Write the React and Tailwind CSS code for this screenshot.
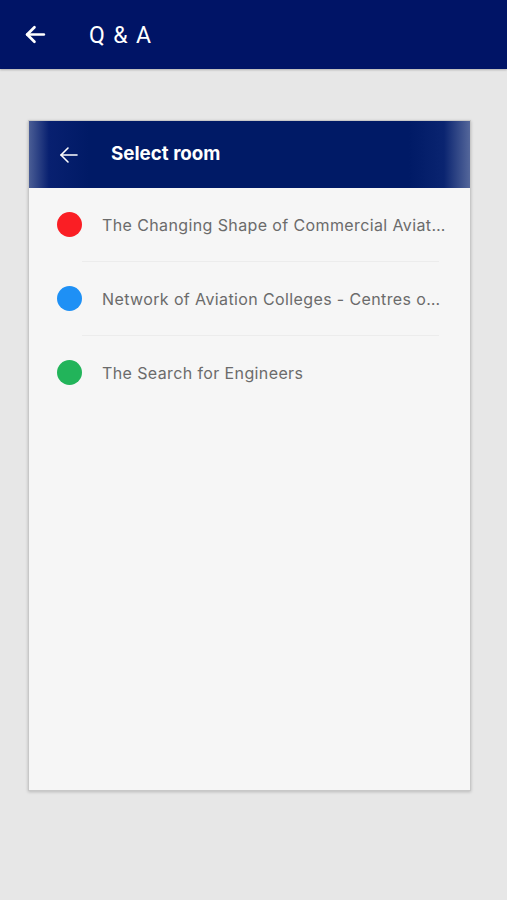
import React from "react";

const rooms = [
  { id: 1, color: "bg-[#fa1e24]", title: "The Changing Shape of Commercial Aviation in a Changing World" },
  { id: 2, color: "bg-[#1e90f5]", title: "Network of Aviation Colleges - Centres of Excellence" },
  { id: 3, color: "bg-[#22b45a]", title: "The Search for Engineers" },
];

const Arrow = ({ className, stroke = 2.5 }) => (
  <svg viewBox="0 0 24 24" className={className} fill="none" stroke="currentColor" strokeWidth={stroke} strokeLinecap="round" strokeLinejoin="round">
    <path d="M20 12H4" />
    <path d="M11 5l-7 7 7 7" />
  </svg>
);

const App = () => {
  return (
    <div className="w-[507px] h-[900px] bg-[#e7e7e7] flex flex-col font-['Inter',sans-serif]">
      <header className="h-[69px] shrink-0 bg-[#001466] flex items-center shadow-[0_1px_2px_rgba(0,0,0,0.25)]">
        <Arrow className="w-[25px] h-[25px] ml-[23px] text-white" stroke={2.6} />
        <span className="ml-[41px] mt-[3px] text-white text-[23px] tracking-[0.06em] font-['Roboto',sans-serif]">Q &amp; A</span>
      </header>

      <div className="pt-[51px] px-[28px]">
        <div className="w-[443px] h-[671px] bg-[#f6f6f6] border border-[#c8c8c8] shadow-[0_1px_3px_rgba(0,0,0,0.2)] flex flex-col">
          <div className="h-[67px] shrink-0 flex items-center bg-[linear-gradient(to_right,#4a5d95_0px,#082070_20px,#001a66_60px,#001a66_380px,#0a2470_415px,#5a6c9e_443px)]">
            <Arrow className="w-[24px] h-[24px] ml-[28px] text-white" stroke={1.6} />
            <span className="ml-[30px] text-white text-[18.8px] font-bold">Select room</span>
          </div>
          <ul className="flex flex-col">
            {rooms.map((room, index) => (
              <li key={room.id} className="flex flex-col">
                <div className="h-[73px] flex items-center pl-[28px] pr-[24px]">
                  <span className={`w-[25px] h-[25px] rounded-full shrink-0 ${room.color}`} />
                  <span className="ml-[20px] text-[16px] tracking-[0.024em] text-[#6b6b6b] truncate">{room.title}</span>
                </div>
                {index < rooms.length - 1 && (
                  <div className="ml-[53px] mr-[31px] h-px bg-[#ececec]" />
                )}
              </li>
            ))}
          </ul>
        </div>
      </div>
    </div>
  );
};

export default App;
